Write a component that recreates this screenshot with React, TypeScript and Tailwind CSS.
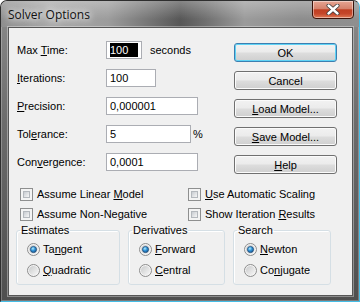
import React from "react";

function Radio({ checked }: { checked?: boolean }) {
  return (
    <svg width="13" height="13" viewBox="0 0 13 13" className="shrink-0">
      <defs>
        <linearGradient id="rbg" x1="0" y1="0" x2="1" y2="1">
          <stop offset="0" stopColor="#c9cacb" />
          <stop offset="1" stopColor="#f7f7f7" />
        </linearGradient>
        <radialGradient id="rdot" cx="0.4" cy="0.35" r="0.75">
          <stop offset="0" stopColor="#b4ecfd" />
          <stop offset="0.45" stopColor="#2f93d8" />
          <stop offset="1" stopColor="#174a80" />
        </radialGradient>
      </defs>
      <circle cx="6.5" cy="6.5" r="6" fill="#f4f4f4" stroke="#8c8c8c" strokeWidth="1" />
      <circle cx="6.5" cy="6.5" r="4.6" fill="url(#rbg)" />
      {checked && <circle cx="6.5" cy="6.5" r="3.1" fill="url(#rdot)" stroke="#1a4571" strokeWidth="0.7" />}
    </svg>
  );
}

function Check() {
  return (
    <span className="flex w-[13px] h-[13px] shrink-0 border border-[#8e8f8f] bg-[#f4f4f4] p-[2px]">
      <span className="flex-1 border border-[#b4b8bd] bg-[linear-gradient(135deg,#c8ccd1,#f6f6f6)]" />
    </span>
  );
}

function Btn({ children, def }: { children: React.ReactNode; def?: boolean }) {
  return (
    <div
      className={
        "h-[19px] w-[103px] rounded-[3px] border flex items-center justify-center bg-[linear-gradient(180deg,#f2f2f2_0%,#ebebeb_48%,#dddddd_52%,#cfcfcf_100%)] " +
        (def
          ? "border-[#3c7fb1] shadow-[inset_0_0_0_1px_#5fd3f5]"
          : "border-[#707070] shadow-[inset_0_0_0_1px_#fbfbfb]")
      }
    >
      {children}
    </div>
  );
}

function Row({ label, children }: { label: React.ReactNode; children: React.ReactNode }) {
  return (
    <div className="flex items-center h-[18px]">
      <div className="w-[89px] shrink-0">{label}</div>
      {children}
    </div>
  );
}

function Field({ w, children }: { w: string; children: React.ReactNode }) {
  return (
    <div className={"h-[18px] border border-[#abadb3] bg-white flex items-center pl-[3px] " + w}>{children}</div>
  );
}

function Group({ title, w, a, b }: { title: string; w: string; a: React.ReactNode; b: React.ReactNode }) {
  return (
    <fieldset className={"h-[62px] border border-[#d5dfe5] rounded-[3px] shadow-[inset_1px_1px_0_#fff] " + w}>
      <legend className="ml-[3px] px-[1px] leading-[14px]">{title}</legend>
      <div className="flex flex-col gap-[5px] pt-[4px] pl-[10px]">
        <div className="flex items-center gap-[3px] h-[16px]">
          <Radio checked />
          <span>{a}</span>
        </div>
        <div className="flex items-center gap-[3px] h-[16px]">
          <Radio />
          <span>{b}</span>
        </div>
      </div>
    </fieldset>
  );
}

export default function App() {
  return (
    <div className="w-[360px] h-[302px] relative rounded-t-[7px] border border-[#2e2e2e] border-r-[#44bde6] border-b-[#44bde6] bg-[linear-gradient(180deg,#8c8c8c_0%,#6c6c6c_40%,#4f4f4f_100%)] overflow-hidden shadow-[inset_0_0_0_1px_rgba(255,255,255,0.25)]">
      <div className="h-[26px] flex items-center pl-[7px] bg-[linear-gradient(180deg,rgba(255,255,255,0.28)_0%,rgba(255,255,255,0)_70%),linear-gradient(90deg,#8e8e8e_0%,#a9a9a9_14%,#9c9c9c_30%,#707070_43%,#575757_50%,#6f6f6f_57%,#9b9b9b_68%,#8d8d8d_84%,#8f8f8f_100%)]">
        <span className="font-['Open_Sans',sans-serif] text-[12px] text-[#111] [text-shadow:0_0_6px_#fff,0_0_10px_#fff] pt-[1px]">
          Solver Options
        </span>
      </div>
      <div className="absolute right-[5px] top-[-1px] w-[42px] h-[19px] rounded-b-[4px] border border-[#3b1209] bg-[linear-gradient(180deg,#e6a593_0%,#d5826c_45%,#c03f22_52%,#c5462a_75%,#df7a55_100%)] shadow-[inset_0_0_0_1px_rgba(255,255,255,0.45)] flex items-center justify-center">
        <svg width="14" height="11" viewBox="0 0 14 11">
          <path d="M2.5 1.5 L11.5 9.5 M11.5 1.5 L2.5 9.5" stroke="#3a3a3a" strokeWidth="4" strokeLinecap="round" />
          <path d="M2.5 1.5 L11.5 9.5 M11.5 1.5 L2.5 9.5" stroke="#ffffff" strokeWidth="2.4" strokeLinecap="round" />
        </svg>
      </div>
      <div className="flex pl-[7px] pr-[6px]">
        <div className="w-[345px] h-[269px] border border-[#565656] bg-[#f0f0f0] shadow-[0_0_0_1px_rgba(255,255,255,0.35)] font-['Liberation_Sans',Arial,sans-serif] text-[11px] text-black leading-[14px]">
          <div className="flex">
            <div className="w-[225px] pl-[8px] pt-[13px] flex flex-col gap-[10px]">
              <Row label={<span>Max <u>T</u>ime:</span>}>
                <Field w="w-[36px]">
                  <span className="bg-black text-white w-[28px] h-[14px] flex items-center">100</span>
                </Field>
                <span className="ml-[8px]">seconds</span>
              </Row>
              <Row label={<span><u>I</u>terations:</span>}>
                <Field w="w-[50px]">100</Field>
              </Row>
              <Row label={<span><u>P</u>recision:</span>}>
                <Field w="w-[92px]">0,000001</Field>
              </Row>
              <Row label={<span>Tol<u>e</u>rance:</span>}>
                <Field w="w-[85px]">5</Field>
                <span className="ml-[2px]">%</span>
              </Row>
              <Row label={<span>Con<u>v</u>ergence:</span>}>
                <Field w="w-[92px]">0,0001</Field>
              </Row>
            </div>
            <div className="pt-[15px] flex flex-col gap-[9px]">
              <Btn def>OK</Btn>
              <Btn>Cancel</Btn>
              <Btn><span><u>L</u>oad Model...</span></Btn>
              <Btn><span><u>S</u>ave Model...</span></Btn>
              <Btn><span><u>H</u>elp</span></Btn>
            </div>
          </div>
          <div className="mt-[11px] pl-[11px] grid grid-cols-[168px_1fr] gap-y-[2px]">
            <div className="flex items-center gap-[4px] h-[18px]"><Check /><span>Assume Linear <u>M</u>odel</span></div>
            <div className="flex items-center gap-[4px] h-[18px]"><Check /><span><u>U</u>se Automatic Scaling</span></div>
            <div className="flex items-center gap-[4px] h-[18px]"><Check /><span>Assume Non-Ne<u>g</u>ative</span></div>
            <div className="flex items-center gap-[4px] h-[18px]"><Check /><span>Show Iteration <u>R</u>esults</span></div>
          </div>
          <div className="pl-[7px] flex gap-[8px]">
            <Group title="Estimates" w="w-[104px]" a={<span>Ta<u>n</u>gent</span>} b={<span><u>Q</u>uadratic</span>} />
            <Group title="Derivatives" w="w-[97px]" a={<span><u>F</u>orward</span>} b={<span><u>C</u>entral</span>} />
            <Group title="Search" w="w-[98px]" a={<span><u>N</u>ewton</span>} b={<span>Co<u>n</u>jugate</span>} />
          </div>
        </div>
      </div>
    </div>
  );
}
